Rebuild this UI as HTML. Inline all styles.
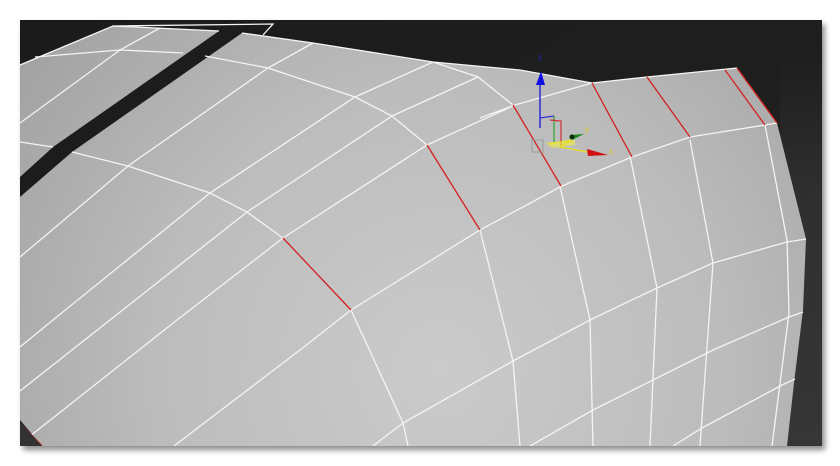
<!DOCTYPE html>
<html><head><meta charset="utf-8"><style>
html,body{margin:0;padding:0;background:#fff;width:840px;height:466px;overflow:hidden}
svg{display:block}
</style></head><body>
<svg width="840" height="466" viewBox="0 0 840 466" xmlns="http://www.w3.org/2000/svg">
<defs>
<linearGradient id="bg" x1="0" y1="0" x2="1" y2="1">
<stop offset="0" stop-color="#1b1b1b"/><stop offset="0.6" stop-color="#1f1f1f"/><stop offset="1" stop-color="#363636"/>
</linearGradient>
<linearGradient id="rs" x1="0" y1="0" x2="0" y2="1">
<stop offset="0" stop-color="#303030" stop-opacity="0"/><stop offset="0.4" stop-color="#303030"/><stop offset="1" stop-color="#363636"/>
</linearGradient>
<radialGradient id="surf" gradientUnits="userSpaceOnUse" cx="440" cy="370" r="520">
<stop offset="0" stop-color="#cbcbcb"/><stop offset="0.55" stop-color="#bcbcbc"/><stop offset="1" stop-color="#a2a2a2"/>
</radialGradient>
<filter id="sh" x="-5%" y="-5%" width="115%" height="115%"><feDropShadow dx="3" dy="4" stdDeviation="3" flood-color="#000" flood-opacity="0.45"/></filter>
</defs>
<rect x="20" y="20" width="802" height="426" fill="url(#bg)" filter="url(#sh)"/>
<svg x="20" y="20" width="802" height="426" viewBox="20 20 802 426" overflow="hidden">
<rect x="20" y="20" width="802" height="426" fill="url(#bg)"/>
<rect x="780" y="60" width="50" height="390" fill="url(#rs)"/>
<polygon points="20,65 113,26 219,31 53,147 20,177" fill="url(#surf)"/>
<polygon points="242,33 313,43 433,62 520,70 592,83 647,77 737,68 777,123 806,239 803,310 794,383 787,446 42,446 20,420 20,197 72,152" fill="url(#surf)"/>
<g fill="none" stroke="#f4f4f4" stroke-width="1.3">
<polyline points="20,65 113,26 219,31"/>
<polyline points="113,26 273,24 263,35"/>
<polyline points="242,33 313,43 433,62 520,70 592,83"/>
<polyline points="592,83 647,77 737,68"/>
<polyline points="35,57 120,50 183,53"/>
<polyline points="160,28 120,50 20,123"/>
<polyline points="20,142 53,147"/>
<polyline points="205,56 268,68 355,97 392,116 427,145"/>
<polyline points="480,230 513,361 520,446"/>
<polyline points="72,152 128,166 210,193 247,212 283,238"/>
<polyline points="351,310 403,423 408,446"/>
<polyline points="433,62 478,77 513,105"/>
<polyline points="560,186 590,320 593,446"/>
<polyline points="630,156 657,288 650,446"/>
<polyline points="690,140 713,263 700,446"/>
<polyline points="765,125 787,240 789,313 772,446"/>
<polyline points="313,43 268,68 128,166 20,257"/>
<polyline points="433,62 355,97 210,193 53,320 20,347"/>
<polyline points="478,77 392,116 247,212 110,320 20,391"/>
<polyline points="480,118 515,105 592,83"/>
<polyline points="515,105 427,145 283,238 177,320 20,444"/>
<polyline points="777,123 765,125 690,137 632,157 562,186 480,230 351,310 300,350 174,446"/>
<polyline points="806,239 787,242 713,263 657,288 590,320 513,361 403,423 373,446"/>
<polyline points="803,312 789,317 713,350 657,378 593,410 530,446"/>
<polyline points="795,379 782,385 702,428 673,446"/>
</g>
<g fill="none" stroke="#d42020" stroke-width="1.3">
<line x1="427" y1="145" x2="480" y2="230"/>
<line x1="283" y1="238" x2="351" y2="310"/>
<line x1="513" y1="105" x2="561" y2="186"/>
<line x1="592" y1="83" x2="632" y2="157"/>
<line x1="647" y1="77" x2="690" y2="137"/>
<line x1="725" y1="70" x2="765" y2="125"/>
<line x1="737" y1="68" x2="777" y2="123"/>
<line x1="22" y1="425" x2="42" y2="446"/>
</g>
<polygon points="20,422 42,446 20,446" fill="#333"/>
<rect x="532" y="140" width="11" height="12" fill="none" stroke="#999" stroke-width="1"/>
<line x1="540" y1="128" x2="540" y2="84" stroke="#2a2ad8" stroke-width="1.5"/>
<polygon points="536,85 545,85 541,71" fill="#1010e0"/>
<text x="538" y="60" font-family="Liberation Sans, sans-serif" font-size="8" fill="#2020d0">z</text>
<polyline points="540,118 554,116" stroke="#3030d0" stroke-width="1.2" fill="none"/>
<line x1="554" y1="116" x2="554" y2="142" stroke="#30a030" stroke-width="1.2"/>
<polyline points="550,120 561,121 561,148" stroke="#d03030" stroke-width="1.2" fill="none"/>
<polygon points="546,143 575,140 575,145 552,148" fill="#f0f040" opacity="0.6"/>
<polyline points="548,144 572,140 560,147 587,152" stroke="#e8e020" stroke-width="1.2" fill="none"/>
<polygon points="570,135 584,134 572,140" fill="#1a8a1a"/>
<circle cx="572" cy="137" r="2.5" fill="#0a300a"/>
<text x="585" y="132" font-family="Liberation Sans, sans-serif" font-size="8" fill="#e0d020">y</text>
<polygon points="587,149 608,155 588,156" fill="#d01010"/>
<text x="609" y="154" font-family="Liberation Sans, sans-serif" font-size="8" fill="#e0d020">x</text>
</svg>
</svg>
</body></html>
